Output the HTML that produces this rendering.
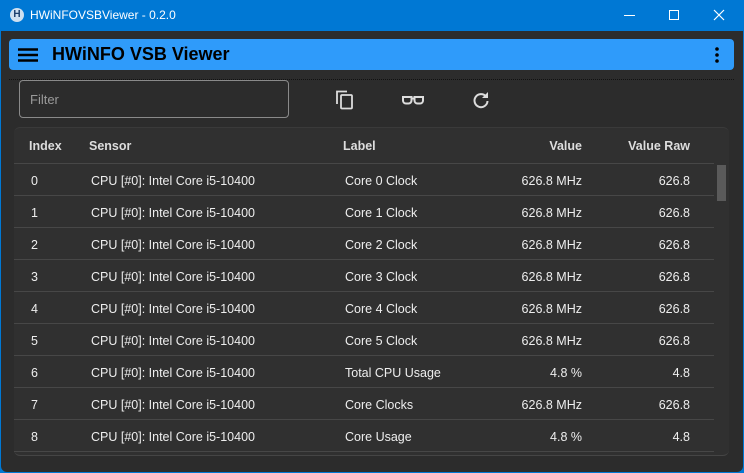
<!DOCTYPE html>
<html><head><style>
*{margin:0;padding:0;box-sizing:border-box}
html,body{width:744px;height:473px;overflow:hidden;background:#0078d4;font-family:"Segoe UI","Liberation Sans",sans-serif}
.win{position:absolute;left:1px;top:31px;width:742px;height:441px;background:#2c2c2c;border-radius:0 0 6px 6px}
.title{position:absolute;left:0;top:0;width:744px;height:31px;color:#fff;font-size:12px}
.title .t{position:absolute;left:30px;top:8px}
.logo{position:absolute;left:10px;top:8px;width:14px;height:14px;border-radius:50%;background:#cfe0f0;color:#1a3d6b;font-size:10px;font-weight:bold;text-align:center;line-height:14px}
.appbar{position:absolute;left:9px;top:39px;width:725px;height:31px;background:#2f9bfa;border-radius:4px}
.appbar .h{position:absolute;left:43px;top:5px;font-size:18px;font-weight:bold;color:#000;font-family:"Liberation Sans",sans-serif}
.dots{position:absolute;left:9px;top:79px;width:725px;border-top:1px dotted #111}
.filter{position:absolute;left:19px;top:80px;width:270px;height:38px;border:1px solid #8a8a8a;border-radius:4px;color:#9a9a9a;font-size:13px;padding:11px 0 0 10px}
.card{position:absolute;left:14px;top:127px;width:715px;height:329px;background:#303030;border-radius:6px;border-top:1px solid #3a3a3a;border-bottom:1px solid #454545}
.row{position:absolute;left:0;width:700px;height:32px;border-bottom:1px solid #474747;color:#eee;font-size:12.5px}
.row span{position:absolute;top:10px}
.hdr{font-weight:bold;color:#ddd}
.sb{position:absolute;left:703px;top:37px;width:9px;height:36px;background:#5a5a5a}
</style></head><body>
<div class="title"><div class="logo">H</div><div class="t">HWiNFOVSBViewer - 0.2.0</div>
<div style="position:absolute;left:624px;top:15px;width:11px;border-top:1px solid #fff"></div>
<div style="position:absolute;left:669px;top:10px;width:10px;height:10px;border:1px solid #fff"></div>
<svg style="position:absolute;left:713px;top:9px" width="12" height="12"><path d="M1 1L11 11M11 1L1 11" stroke="#fff" stroke-width="1.2"/></svg>
</div>
<div class="win"></div>
<div class="appbar">
<svg style="position:absolute;left:9px;top:9px" width="20" height="14"><path d="M0 1.5H20M0 7H20M0 12.5H20" stroke="#000" stroke-width="2.4"/></svg>
<div class="h">HWiNFO VSB Viewer</div>
<svg style="position:absolute;left:706px;top:8px" width="4" height="16"><circle cx="2" cy="2" r="1.8"/><circle cx="2" cy="8" r="1.8"/><circle cx="2" cy="14" r="1.8"/></svg>
</div>
<div class="dots"></div>
<div class="filter">Filter</div>
<svg style="position:absolute;left:336px;top:90px" width="18" height="20" fill="none" stroke="#ddd" stroke-width="1.8"><path d="M1 14V1.5H11"/><rect x="5" y="5" width="11" height="13.5" rx="1"/></svg>
<svg style="position:absolute;left:402px;top:95px" width="22" height="10" fill="none" stroke="#ddd" stroke-width="2"><path d="M1 2H9.5V5.5A3 3 0 0 1 6.5 8.5H4A3 3 0 0 1 1 5.5ZM12.5 2H21V5.5A3 3 0 0 1 18 8.5H15.5A3 3 0 0 1 12.5 5.5ZM9.5 3.5H12.5"/></svg>
<svg style="position:absolute;left:472px;top:91px" width="18" height="18" fill="none" stroke="#ddd" stroke-width="2"><path d="M14 5.5A6.5 6.5 0 1 0 15.5 10"/><path d="M16 1V7H10Z" fill="#ddd" stroke="none"/></svg>
<div class="card">
<div class="row hdr" style="top:0;height:36px"><span style="left:15px;top:11px">Index</span><span style="left:75px;top:11px">Sensor</span><span style="left:329px;top:11px">Label</span><span style="left:520px;top:11px;width:48px;text-align:right">Value</span><span style="left:600px;top:11px;width:76px;text-align:right">Value Raw</span></div>
<div class="sb"></div>
</div>
<div style="position:absolute;left:14px;top:164px">
<div class="row" style="top:0"><span style="left:17px">0</span><span style="left:77px">CPU [#0]: Intel Core i5-10400</span><span style="left:331px">Core 0 Clock</span><span style="left:468px;width:100px;text-align:right">626.8 MHz</span><span style="left:576px;width:100px;text-align:right">626.8</span></div>
<div class="row" style="top:32px"><span style="left:17px">1</span><span style="left:77px">CPU [#0]: Intel Core i5-10400</span><span style="left:331px">Core 1 Clock</span><span style="left:468px;width:100px;text-align:right">626.8 MHz</span><span style="left:576px;width:100px;text-align:right">626.8</span></div>
<div class="row" style="top:64px"><span style="left:17px">2</span><span style="left:77px">CPU [#0]: Intel Core i5-10400</span><span style="left:331px">Core 2 Clock</span><span style="left:468px;width:100px;text-align:right">626.8 MHz</span><span style="left:576px;width:100px;text-align:right">626.8</span></div>
<div class="row" style="top:96px"><span style="left:17px">3</span><span style="left:77px">CPU [#0]: Intel Core i5-10400</span><span style="left:331px">Core 3 Clock</span><span style="left:468px;width:100px;text-align:right">626.8 MHz</span><span style="left:576px;width:100px;text-align:right">626.8</span></div>
<div class="row" style="top:128px"><span style="left:17px">4</span><span style="left:77px">CPU [#0]: Intel Core i5-10400</span><span style="left:331px">Core 4 Clock</span><span style="left:468px;width:100px;text-align:right">626.8 MHz</span><span style="left:576px;width:100px;text-align:right">626.8</span></div>
<div class="row" style="top:160px"><span style="left:17px">5</span><span style="left:77px">CPU [#0]: Intel Core i5-10400</span><span style="left:331px">Core 5 Clock</span><span style="left:468px;width:100px;text-align:right">626.8 MHz</span><span style="left:576px;width:100px;text-align:right">626.8</span></div>
<div class="row" style="top:192px"><span style="left:17px">6</span><span style="left:77px">CPU [#0]: Intel Core i5-10400</span><span style="left:331px">Total CPU Usage</span><span style="left:468px;width:100px;text-align:right">4.8 %</span><span style="left:576px;width:100px;text-align:right">4.8</span></div>
<div class="row" style="top:224px"><span style="left:17px">7</span><span style="left:77px">CPU [#0]: Intel Core i5-10400</span><span style="left:331px">Core Clocks</span><span style="left:468px;width:100px;text-align:right">626.8 MHz</span><span style="left:576px;width:100px;text-align:right">626.8</span></div>
<div class="row" style="top:256px"><span style="left:17px">8</span><span style="left:77px">CPU [#0]: Intel Core i5-10400</span><span style="left:331px">Core Usage</span><span style="left:468px;width:100px;text-align:right">4.8 %</span><span style="left:576px;width:100px;text-align:right">4.8</span></div>
</div>
</body></html>
